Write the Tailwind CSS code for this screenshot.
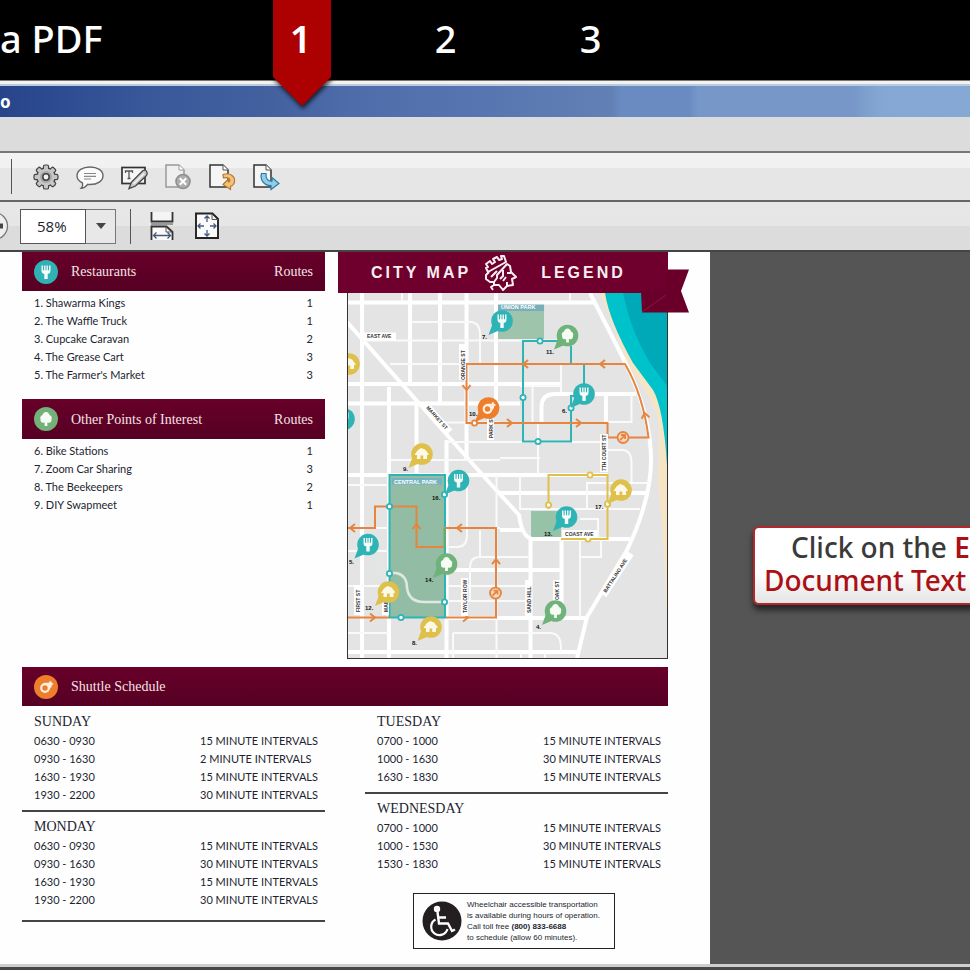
<!DOCTYPE html>
<html lang="en">
<head>
    <meta charset="UTF-8">
    <meta name="viewport" content="width=device-width, initial-scale=1.0">
    <title>Edit a PDF</title>
    <script src="https://cdn.jsdelivr.net/npm/@tailwindcss/browser@4"></script>
</head>
<body class="min-h-screen flex flex-col overflow-x-hidden bg-[#555555] font-['Lato','Noto_Sans',sans-serif] text-[#231f30]">

    <!-- Step header -->
    <header class="relative z-10 flex h-20 items-center bg-black pb-1 font-['Noto_Sans',sans-serif] text-[38px] leading-none font-medium text-white">
        <h1 class="w-[228px] whitespace-nowrap">a PDF</h1>
        <ol class="flex">
            <li class="relative w-[145px] text-center" aria-current="step">
                <svg class="absolute left-[43px] -top-5 w-[62px] h-[112px] drop-shadow-[1px_3px_2px_rgba(0,0,0,0.7)]" viewBox="0 0 62 112" aria-hidden="true">
                    <path d="M2 0H60V78L31 107L2 78Z" fill="#ad0000"/>
                </svg>
                <span class="relative font-semibold">1</span>
            </li>
            <li class="w-[145px] text-center">2</li>
            <li class="w-[145px] text-center">3</li>
        </ol>
    </header>

    <!-- Window title and menu bar -->
    <div class="h-[6px] border-t border-[#777] border-b-2 border-b-[#b9cbe0] bg-[#f4f1ee]"></div>
    <div class="flex h-[31px] items-center bg-[linear-gradient(90deg,#28458b_0%,#2c4a90_5%,#38589a_15%,#43619f_28%,#4d6ca9_36%,#5776b1_50%,#6280b4_63%,#698bc2_64%,#698bc2_71%,#7697c8_72%,#7697c8_88%,#7c9fcc_89%,#84a7d4_91%,#86a8d4_100%)]">
        <span class="font-['Noto_Sans'] text-[17px] font-bold text-white">o</span>
    </div>
    <div class="h-[34px] bg-[#dcdcdc]"></div>

    <!-- Toolbars -->
    <div class="flex h-[51px] items-center border-t-2 border-b-2 border-t-[#777] border-b-[#666] bg-[linear-gradient(#f3f3f3_0%,#f1f1f1_32%,#e6e6e6_33%,#e6e6e6_100%)] pl-[11px]">
        <span class="mr-3 h-[35px] w-px bg-[#555]"></span>
        <button type="button" aria-label="Settings" class="flex w-11 justify-center">
            <svg class="size-7" viewBox="0 0 28 28">
                <defs>
                    <g id="teeth">
                        <rect x="12" y="2.6" width="4" height="22.8" rx="1"/>
                        <rect x="12" y="2.6" width="4" height="22.8" rx="1" transform="rotate(45 14 14)"/>
                        <rect x="12" y="2.6" width="4" height="22.8" rx="1" transform="rotate(90 14 14)"/>
                        <rect x="12" y="2.6" width="4" height="22.8" rx="1" transform="rotate(135 14 14)"/>
                        <circle cx="14" cy="14" r="8.6"/>
                    </g>
                </defs>
                <use href="#teeth" fill="#444" stroke="#444" stroke-width="2.4"/>
                <use href="#teeth" fill="#c6c6c6"/>
                <circle cx="14" cy="14" r="6" fill="#a8a8a8"/>
                <circle cx="14" cy="14" r="3.2" fill="#f2f2f2" stroke="#444" stroke-width="1.6"/>
            </svg>
        </button>
        <button type="button" aria-label="Comment" class="flex w-11 justify-center">
            <svg class="size-7" viewBox="0 0 28 28" fill="none" stroke="#666" stroke-width="1.4">
                <path d="M14 4C21.5 4 27 7.6 27 12.8S21.5 21.5 14 21.5C13.3 21.5 12.4 21.5 11.7 21.3C10 23.4 7.5 25.4 5 25.4C6.6 23.6 7 21.6 6.5 20C3.2 18.5 1 16 1 12.8C1 7.6 6.5 4 14 4Z" fill="#fafafa"/>
                <path d="M8 10.5H20M8 13.3H20M8 16H15" stroke="#888" stroke-width="1.2"/>
            </svg>
        </button>
        <button type="button" aria-label="Edit document text" class="flex w-11 justify-center">
            <svg class="size-7" viewBox="0 0 28 28">
                <rect x="2" y="4.5" width="23" height="16" fill="#f6f6f6" stroke="#333" stroke-width="1.7"/>
                <path d="M5.5 10V8H12.5V10M9 8V15.5M7.5 15.5H10.5" fill="none" stroke="#555" stroke-width="1.3"/>
                <path d="M9 25.5L11.5 19L23 7.5Q26 6 27 9.5Q27.5 11.5 26 13L15.5 23Z" fill="#c9c9c9" stroke="#444" stroke-width="1.3"/>
                <path d="M13.5 21L24 10.5" stroke="#f4f4f4" stroke-width="1.5" fill="none"/>
            </svg>
        </button>
        <button type="button" aria-label="Delete page" class="flex w-11 justify-center">
            <svg class="size-7" viewBox="0 0 28 28">
                <path d="M2 2H15L20 7V24H2Z" fill="#efefef" stroke="#999" stroke-width="1.5"/>
                <path d="M15 2V7H20" fill="#fff" stroke="#999"/>
                <circle cx="19" cy="18.5" r="7.8" fill="#8f8f8f"/>
                <circle cx="19" cy="18.5" r="6.2" fill="#adadad"/>
                <path d="M15.8 15.3L22.2 21.7M22.2 15.3L15.8 21.7" stroke="#fff" stroke-width="2"/>
            </svg>
        </button>
        <button type="button" aria-label="Rotate page" class="flex w-11 justify-center">
            <svg class="size-7" viewBox="0 0 28 28">
                <path d="M2 2H15L20 7V24H2Z" fill="#f5f5f5" stroke="#333" stroke-width="1.5"/>
                <path d="M15 2V7H20" fill="#fff" stroke="#555"/>
                <path d="M15 11.5C22 9 27.5 13.5 26.5 19C26 21.5 24.5 22.8 22.5 23.3V26.5L15 21.5L20.5 16V19C22.5 18.5 22.5 15.5 19.5 14.8C18 14.5 17 14.8 15.5 15Z" fill="#f6c075" stroke="#b07a35" stroke-width="1.2"/>
            </svg>
        </button>
        <button type="button" aria-label="Export page" class="flex w-11 justify-center">
            <svg class="size-7" viewBox="0 0 28 28">
                <path d="M2 2H14L19 7V24H2Z" fill="#f5f5f5" stroke="#333" stroke-width="1.5"/>
                <path d="M14 2V7H19" fill="#fff" stroke="#555"/>
                <path d="M9.5 10.5C8 16 11 22.5 19 22.5V26.5L27 20.5L20 14.5V18.2C16 18.5 13.5 15.5 14 10.5Z" fill="#8fcdea" stroke="#2d7ba0" stroke-width="1.2"/>
            </svg>
        </button>
    </div>
    <div class="flex h-[50px] items-center border-b-2 border-b-[#444] bg-[linear-gradient(#e7e7e7_0%,#e6e6e6_50%,#dcdcdc_51%,#dcdcdc_100%)]">
        <button type="button" aria-label="Zoom in" class="w-5">
            <svg class="w-[10px] h-7" viewBox="0 0 10 28">
                <circle cx="-6" cy="14" r="13.5" fill="#eee" stroke="#777" stroke-width="1.3"/>
                <path d="M0 11.5H3V16.5H0Z" fill="#444"/>
            </svg>
        </button>
        <input type="text" aria-label="Zoom" value="58%" class="h-[35px] w-[66px] border border-[#555] bg-white px-4 font-['Open_Sans'] text-[15px]">
        <button type="button" aria-label="Zoom levels" class="flex h-[35px] w-[30px] items-center justify-center border border-l-0 border-[#777] bg-[#e8e8e8]">
            <svg class="w-[10px] h-[6px]" viewBox="0 0 10 6"><path d="M0 0H10L5 6Z" fill="#444"/></svg>
        </button>
        <span class="ml-[14px] mr-2 h-[35px] w-px bg-[#555]"></span>
        <button type="button" aria-label="Fit width" class="flex w-[45px] justify-center">
            <svg class="size-7" viewBox="0 0 28 28">
                <path d="M3.5 0V9.5H24.5V0" fill="#f4f4f4" stroke="#333" stroke-width="1.8"/>
                <path d="M3.5 28V14.5H18.5L24.5 20V28" fill="#fafafa" stroke="#333" stroke-width="1.8"/>
                <path d="M3 12H25" stroke="#999" stroke-width="2"/>
                <path d="M18 14.5V20H24" fill="none" stroke="#555"/>
                <path d="M5.5 23.5H22.5M8.5 20.5L5.5 23.5L8.5 26.5M19.5 20.5L22.5 23.5L19.5 26.5" fill="none" stroke="#44587c" stroke-width="1.3"/>
            </svg>
        </button>
        <button type="button" aria-label="Fit page" class="flex w-[45px] justify-center">
            <svg class="size-7" viewBox="0 0 28 28">
                <path d="M3 1.5H19.5L25 7V26H3Z" fill="#fafafa" stroke="#222" stroke-width="1.9"/>
                <path d="M19 2V7.5H25" fill="none" stroke="#555"/>
                <path d="M14 4V10M14 18V24M5 14H11M17 14H23M11.5 6.5L14 4L16.5 6.5M11.5 21.5L14 24L16.5 21.5M7.5 11.5L5 14L7.5 16.5M20.5 11.5L23 14L20.5 16.5" fill="none" stroke="#44587c" stroke-width="1.3"/>
            </svg>
        </button>
    </div>

    <!-- Document area -->
    <main class="flex flex-1">
        <article class="w-[73.2%] bg-[#fefefe] pl-[22px] pr-[42px] pb-3">
            <div class="grid grid-cols-[303fr_321fr] gap-[22px]">
                <div>
                    <section>
                        <div class="flex h-[39px] items-center bg-linear-to-b from-[#680029] to-[#560024] px-3 font-['Liberation_Serif',serif] text-[14px] text-[#f5e3e4]">
                            <svg class="mr-[13px] size-6" viewBox="-12 -12 24 24"><use href="#fork-badge"/></svg>
                            <h2 class="flex-1">Restaurants</h2>
                            <span>Routes</span>
                        </div>
                        <table class="mt-[3px] w-full text-[11px] leading-[18px]">
                            <tbody>
                                <tr><td class="pl-3">1. Shawarma Kings</td><td class="pr-3 text-right">1</td></tr>
                                <tr><td class="pl-3">2. The Waffle Truck</td><td class="pr-3 text-right">1</td></tr>
                                <tr><td class="pl-3">3. Cupcake Caravan</td><td class="pr-3 text-right">2</td></tr>
                                <tr><td class="pl-3">4. The Grease Cart</td><td class="pr-3 text-right">3</td></tr>
                                <tr><td class="pl-3">5. The Farmer's Market</td><td class="pr-3 text-right">3</td></tr>
                            </tbody>
                        </table>
                    </section>
                    <section class="mt-[15px]">
                        <div class="flex h-10 items-center bg-linear-to-b from-[#680029] to-[#560024] px-3 font-['Liberation_Serif',serif] text-[14px] text-[#f5e3e4]">
                            <svg class="mr-[13px] size-6" viewBox="-12 -12 24 24"><use href="#tree-badge"/></svg>
                            <h2 class="flex-1">Other Points of Interest</h2>
                            <span>Routes</span>
                        </div>
                        <table class="mt-[3px] w-full text-[11px] leading-[18px]">
                            <tbody>
                                <tr><td class="pl-3">6. Bike Stations</td><td class="pr-3 text-right">1</td></tr>
                                <tr><td class="pl-3">7. Zoom Car Sharing</td><td class="pr-3 text-right">3</td></tr>
                                <tr><td class="pl-3">8. The Beekeepers</td><td class="pr-3 text-right">2</td></tr>
                                <tr><td class="pl-3">9. DIY Swapmeet</td><td class="pr-3 text-right">1</td></tr>
                            </tbody>
                        </table>
                    </section>
                </div>

                <section class="relative">
                    <h2 class="relative z-10 -ml-[9px] flex h-[41px] items-center bg-[#6f002d] pl-[33px] font-['Liberation_Sans',sans-serif] text-[16px] font-bold tracking-[3px] text-[#fbeef0]">
                        <span>CITY MAP</span>
                        <svg class="ml-3 mr-[22px] size-9" viewBox="0 0 36 36" fill="none" stroke="#fbeef0" stroke-width="2" stroke-linejoin="round" aria-hidden="true">
                            <path d="M3 9L7 6L9 9L12 7L10 4L14 2L16 5L19 4L18 1L21 1L23 7L5 17L3 13L5 12Z"/>
                            <path d="M6 17L3 20V24L7 27H11V30L8 32L10 35M11 27L14 23V20L24 9L27 11L28 17L33 22L29 24L30 30L24 31L20 35L16 30L11 30"/>
                            <path d="M8 22L14 16M20 15V21L17 24M24 18H28M23 22L20 26M24 31V27"/>
                        </svg>
                        <span>LEGEND</span>
                    </h2>
                    <svg class="absolute -right-[22px] top-[17px] z-10 w-[49px] h-[44px]" viewBox="0 0 49 44" aria-hidden="true">
                        <path d="M0 22L1 43.5H48L40 22L48 0.5H24V22Z" fill="#6a0029"/>
                        <path d="M1 43L25 26" stroke="#8b3055" stroke-width="0.6"/>
                    </svg>

                    <svg class="block w-full border border-t-0 border-[#333]" viewBox="348 293 319 365" role="img" aria-label="City map" font-family="Liberation Sans, sans-serif" font-weight="bold">
                        <defs>
                            <g id="fork"><path d="M-4.5 -6.5V-1.5Q-4.5 1.5 -1.7 2V7H1.7V2Q4.5 1.5 4.5 -1.5V-6.5H3V-1.8H1.9V-6.5H0.5V-1.8H-0.5V-6.5H-1.9V-1.8H-3V-6.5Z" fill="#f4fbfb"/></g>
                            <g id="tree"><path d="M-1.4 7V3.5Q-5.5 4.5 -5.5 0.5Q-6.5 -3 -3.5 -4Q-2.5 -7 0 -7Q2.5 -7 3.5 -4Q6.5 -3 5.5 0.5Q5.5 4.5 1.4 3.5V7Z" fill="#f6fbf4"/></g>
                            <g id="house"><path d="M-7.5 1L-4.5 -3.5L-1 -6L3 -4.5L7 0.5L5 1V5H1.2V1.5H-1.5V5H-5V1Z" fill="#fdf9e8"/></g>
                            <g id="ride"><circle cx="-1" cy="1" r="3.8" fill="none" stroke="#fff0e4" stroke-width="2.2"/><path d="M-2 -3.2H4M4.5 -5.5L4.5 0.5M4 -2L3 2" fill="none" stroke="#fff0e4" stroke-width="2"/><path d="M3.5 -6L7.5 -3L3.5 0Z" fill="#fff0e4"/></g>
                            <g id="fork-badge"><circle r="12" fill="#30b1b4"/><use href="#fork"/></g>
                            <g id="tree-badge"><circle r="12" fill="#74b07a"/><use href="#tree"/></g>
                            <g id="ride-badge"><circle r="12" fill="#ee7d2c"/><use href="#ride"/></g>
                            <g id="pin"><path d="M-13.5 14L-9.5 3L-3 9.5Z"/><circle r="10.8"/></g>
                            <g id="fork-pin"><use href="#pin" fill="#2fb4b6"/><use href="#fork"/></g>
                            <g id="tree-pin"><use href="#pin" fill="#6fb27a"/><use href="#tree"/></g>
                            <g id="house-pin"><use href="#pin" fill="#dfc04a"/><use href="#house"/></g>
                            <g id="ride-pin"><use href="#pin" fill="#ee7d2c"/><use href="#ride"/></g>
                            <path id="arrow" d="M3 -4L-2 0L3 4" fill="none" stroke="#e5853f" stroke-width="2"/>
                        </defs>

                        <rect x="347" y="293" width="322" height="366" fill="#e4e4e5"/>

                        <!-- Coast -->
                        <path d="M600 293L627 362L643 387Q657 408 659 425Q659 470 658 480L663 537L668 643V293Z" fill="#f5e5c4"/>
                        <path d="M605 293Q609 320 633 363L653 390Q665 410 668 485V293Z" fill="#00c2cb"/>
                        <path d="M623 293Q630 330 650 363L668 387V293Z" fill="#00a9b8"/>

                        <!-- Parks -->
                        <rect x="498" y="304" width="46" height="35" fill="#9fc4ac"/>
                        <rect x="498" y="304" width="46" height="7" fill="#79aebb"/>
                        <rect x="531" y="511" width="30" height="26" fill="#96c3a7"/>

                        <!-- Streets -->
                        <g fill="none" stroke="#fff" stroke-width="4">
                            <path d="M347 302.5H594M347 384H561M347 403.5H520M347 475H608M347 652H578M500 493H648M500 530H522M446 570H561M446 618H588"/>
                            <path d="M362 293V658M389 387V658M410 293V384M440 293V402M466.5 293V460M496 293V403M446.5 440V658M416.5 404V475M530.5 538V658M561.5 539V618M606 394V424"/>
                            <path d="M541.5 422V406Q542 394 555 394H636"/>
                            <path d="M347 322L487 480L519 515Q522 537 532 539H630"/>
                            <path d="M590 293L625 362Q651 415 651 460Q651 500 627 550L587 617L577 658"/>
                        </g>
                        <g fill="none" stroke="#fafafa" stroke-width="2">
                            <path d="M412 322H470Q480 322 480 335V364M362 340.5H560M390 364H466M440 422.5H500M446 442H608M390 460H500M500 458H540M347 485H389M347 528H389M347 551H389M446 528H500"/>
                            <path d="M561 364V392M532.5 386V422M520 386H560M631.5 394V422H606M538 423V475M608 450H622Q631 450 631.5 462V482M587 509V483H650M520 509H640M520 475V510"/>
                            <path d="M446 547H457Q467 547 467 535V475M470 600V568Q470 557 479 557H530M480 530V557M446 586H530M446 601H530M453 633H550Q561 633 561 648V652M453 633V658M580 540V617M580 557H601V540M496.5 475V658M347 586H389M347 633H389M580 519H598V539M521 652V658M545 652V658"/>
                            <path d="M402 302V293M570 302V293"/>
                        </g>

                        <!-- Central park -->
                        <rect x="389.5" y="475" width="55.5" height="142.5" fill="#92bda4"/>
                        <path d="M376 550V558Q376 573 390 573H396Q407 575 407 588Q409 602 424 602H445" fill="none" stroke="#dfe8e3" stroke-width="2.5"/>
                        <rect x="392" y="478" width="50" height="6.5" fill="#74b3c2"/>

                        <!-- Routes -->
                        <g fill="none" stroke-width="2">
                            <g stroke="#2fb4b6">
                                <path d="M567 341H523V441.5H571V396H584V364M571 346V364"/>
                                <path d="M389.5 475H445V617.5H389.5Z"/>
                            </g>
                            <path d="M548.5 509V475H607.5V539H561" stroke="#dfc04a"/>
                            <g stroke="#e5853f">
                                <path d="M466.5 364H625Q643 395 648.5 437.5H607.5V423H466.5Z"/>
                                <path d="M347 528H375V506.5H416.5V547H444.5M444.5 528H496V617.5H446M347 617.5H389"/>
                            </g>
                            <path d="M444.5 547V528" stroke="#74a85c"/>
                        </g>
                        <use href="#arrow" x="525" y="364"/>
                        <use href="#arrow" x="602" y="364"/>
                        <use href="#arrow" x="352" y="528"/>
                        <use href="#arrow" x="459" y="528"/>
                        <use href="#arrow" transform="translate(466.5 388) rotate(-90)"/>
                        <use href="#arrow" transform="translate(510 423) rotate(180)"/>
                        <use href="#arrow" transform="translate(579 423) rotate(180)"/>
                        <use href="#arrow" transform="translate(466 617.5) rotate(180)"/>
                        <use href="#arrow" transform="translate(373 617.5) rotate(180)"/>
                        <use href="#arrow" transform="translate(645 415) rotate(80)"/>
                        <use href="#arrow" transform="translate(416.5 526) rotate(90)"/>
                        <use href="#arrow" transform="translate(496 561) rotate(90)"/>

                        <!-- Stops -->
                        <g fill="#fff" stroke-width="1.8">
                            <g stroke="#2fb4b6">
                                <circle cx="540" cy="341" r="2.6"/><circle cx="523" cy="397.5" r="2.6"/><circle cx="538" cy="441.5" r="2.6"/><circle cx="571" cy="408" r="2.6"/>
                                <circle cx="389.5" cy="506.5" r="2.6"/><circle cx="389.5" cy="573.5" r="2.6"/><circle cx="401" cy="617.5" r="2.6"/><circle cx="444.5" cy="602" r="2.6"/><circle cx="444.5" cy="494.5" r="2.6"/>
                            </g>
                            <g stroke="#dfc04a">
                                <circle cx="590" cy="475" r="2.6"/><circle cx="548.5" cy="505" r="2.6"/><circle cx="607.5" cy="504" r="2.6"/><circle cx="588" cy="539" r="2.6"/>
                            </g>
                            <g stroke="#e5853f">
                                <circle cx="474.5" cy="423" r="2.6"/>
                                <circle cx="623" cy="437.5" r="5.5" fill="#f6d9bf"/><path d="M620 440L625 435M621 435H625V439" fill="none"/>
                                <circle cx="495.5" cy="593" r="5.5" fill="#f6d9bf"/><path d="M492.5 595.5L497.5 590.5M493.5 590.5H497.5V594.5" fill="none"/>
                            </g>
                        </g>

                        <!-- Street names -->
                        <g fill="#fff">
                            <rect x="363" y="332.5" width="33" height="8"/>
                            <rect x="459" y="344" width="7" height="36"/>
                            <rect x="0" y="-4" width="38" height="8" transform="translate(424 404) rotate(48)"/>
                            <rect x="487" y="412" width="7" height="28"/>
                            <rect x="600" y="434" width="8" height="38"/>
                            <rect x="562" y="530" width="35" height="8"/>
                            <rect x="0" y="-4" width="50" height="8" transform="translate(603 595) rotate(-57)"/>
                            <rect x="354" y="585" width="7" height="30"/>
                            <rect x="382" y="585" width="7" height="30"/>
                            <rect x="461" y="578" width="7" height="38"/>
                            <rect x="525" y="580" width="7" height="36"/>
                            <rect x="553" y="580" width="7" height="22"/>
                        </g>
                        <g fill="#333" font-size="5">
                            <text x="367" y="338.5">EAST AVE</text>
                            <text transform="translate(464.5 380) rotate(-90)">ORANGE ST</text>
                            <text transform="translate(426 408) rotate(48)">MARKET ST</text>
                            <text transform="translate(492.5 438) rotate(-90)">PARK ST</text>
                            <text transform="translate(606 471) rotate(-90)">7TH COURT ST</text>
                            <text x="565" y="536">COAST AVE</text>
                            <text transform="translate(606 593) rotate(-57)">BATTALINO AVE</text>
                            <text transform="translate(359.5 612) rotate(-90)">FIRST ST</text>
                            <text transform="translate(387.5 612) rotate(-90)">MAIN ST</text>
                            <text transform="translate(466.5 613) rotate(-90)">TAYLOR ROW</text>
                            <text transform="translate(530.5 613) rotate(-90)">SAND HILL</text>
                            <text transform="translate(558.5 600) rotate(-90)">OAK ST</text>
                        </g>
                        <g fill="#fff" font-size="5.5">
                            <text x="501" y="309.5">UNION PARK</text>
                            <text x="394" y="483.5">CENTRAL PARK</text>
                        </g>

                        <!-- Pins -->
                        <use href="#fork-pin" x="502" y="321"/>
                        <use href="#fork-pin" x="584" y="394"/>
                        <use href="#fork-pin" x="458.5" y="480.5"/>
                        <use href="#fork-pin" x="368" y="544.5"/>
                        <use href="#fork-pin" x="566.5" y="517"/>
                        <use href="#fork-pin" x="344" y="419"/>
                        <use href="#tree-pin" x="567.5" y="335.5"/>
                        <use href="#tree-pin" x="446.5" y="564"/>
                        <use href="#tree-pin" x="555.5" y="611"/>
                        <use href="#house-pin" x="349" y="364"/>
                        <use href="#house-pin" x="422" y="454"/>
                        <use href="#house-pin" x="388.5" y="592"/>
                        <use href="#house-pin" x="431" y="627"/>
                        <use href="#house-pin" x="621" y="490"/>
                        <use href="#ride-pin" x="488.5" y="408"/>
                        <g fill="#111" font-size="6">
                            <text x="482" y="339">7.</text>
                            <text x="546" y="354">11.</text>
                            <text x="469" y="416">10.</text>
                            <text x="403" y="471">9.</text>
                            <text x="562" y="413">6.</text>
                            <text x="432" y="500">16.</text>
                            <text x="349" y="564">5.</text>
                            <text x="365" y="610">12.</text>
                            <text x="425" y="582">14.</text>
                            <text x="412" y="645">8.</text>
                            <text x="595" y="509">17.</text>
                            <text x="544" y="536">13.</text>
                            <text x="536" y="629">4.</text>
                        </g>
                    </svg>
                </section>
            </div>

            <section class="mt-2">
                <div class="flex h-[39px] items-center bg-linear-to-b from-[#680029] to-[#560024] px-3 font-['Liberation_Serif',serif] text-[14px] text-[#f5e3e4]">
                    <svg class="mr-[13px] size-6" viewBox="-12 -12 24 24"><use href="#ride-badge"/></svg>
                    <h2>Shuttle Schedule</h2>
                </div>
                <div class="grid grid-cols-2 gap-10 pt-[6px] text-[11px] leading-[18px] whitespace-nowrap">
                    <div>
                        <div class="border-b-2 border-[#444] pb-[6px]">
                            <h3 class="pl-3 font-['Liberation_Serif',serif] text-[14px] leading-[20px]">SUNDAY</h3>
                            <table class="w-full">
                                <tbody>
                                    <tr><td class="pl-3">0630 - 0930</td><td class="w-[125px]">15 MINUTE INTERVALS</td></tr>
                                    <tr><td class="pl-3">0930 - 1630</td><td>2 MINUTE INTERVALS</td></tr>
                                    <tr><td class="pl-3">1630 - 1930</td><td>15 MINUTE INTERVALS</td></tr>
                                    <tr><td class="pl-3">1930 - 2200</td><td>30 MINUTE INTERVALS</td></tr>
                                </tbody>
                            </table>
                        </div>
                        <div class="border-b-2 border-[#444] pt-[5px] pb-[11px]">
                            <h3 class="pl-3 font-['Liberation_Serif',serif] text-[14px] leading-[20px]">MONDAY</h3>
                            <table class="w-full">
                                <tbody>
                                    <tr><td class="pl-3">0630 - 0930</td><td class="w-[125px]">15 MINUTE INTERVALS</td></tr>
                                    <tr><td class="pl-3">0930 - 1630</td><td>30 MINUTE INTERVALS</td></tr>
                                    <tr><td class="pl-3">1630 - 1930</td><td>15 MINUTE INTERVALS</td></tr>
                                    <tr><td class="pl-3">1930 - 2200</td><td>30 MINUTE INTERVALS</td></tr>
                                </tbody>
                            </table>
                        </div>
                    </div>
                    <div>
                        <div class="border-b-2 border-[#444] pb-[6px]">
                            <h3 class="pl-3 font-['Liberation_Serif',serif] text-[14px] leading-[20px]">TUESDAY</h3>
                            <table class="w-full">
                                <tbody>
                                    <tr><td class="pl-3">0700 - 1000</td><td class="w-[125px]">15 MINUTE INTERVALS</td></tr>
                                    <tr><td class="pl-3">1000 - 1630</td><td>30 MINUTE INTERVALS</td></tr>
                                    <tr><td class="pl-3">1630 - 1830</td><td>15 MINUTE INTERVALS</td></tr>
                                </tbody>
                            </table>
                        </div>
                        <div class="pt-[5px]">
                            <h3 class="pl-3 font-['Liberation_Serif',serif] text-[14px] leading-[20px]">WEDNESDAY</h3>
                            <table class="w-full">
                                <tbody>
                                    <tr><td class="pl-3">0700 - 1000</td><td class="w-[125px]">15 MINUTE INTERVALS</td></tr>
                                    <tr><td class="pl-3">1000 - 1530</td><td>30 MINUTE INTERVALS</td></tr>
                                    <tr><td class="pl-3">1530 - 1830</td><td>15 MINUTE INTERVALS</td></tr>
                                </tbody>
                            </table>
                        </div>
                        <div class="mt-5 ml-12 flex h-14 w-[202px] items-center border border-[#222] pl-2 font-['Liberation_Sans',sans-serif] text-[8px] leading-[11px]">
                            <svg class="mr-[5px] size-10" viewBox="0 0 40 40" aria-hidden="true">
                                <circle cx="20" cy="20" r="19.5" fill="#231f20"/>
                                <circle cx="15" cy="8" r="3.2" fill="#fff"/>
                                <path d="M15.5 11L17 22.5H26L30 30L33 28.5M16 16.5H24" fill="none" stroke="#fff" stroke-width="2.4"/>
                                <path d="M13.5 18.5A8.3 8.3 0 1 0 25.5 28" fill="none" stroke="#fff" stroke-width="2.2"/>
                            </svg>
                            <p>Wheelchair accessible transportation<br>is available during hours of operation.<br>Call toll free <b>(800) 833-6688</b><br>to schedule (allow 60 minutes).</p>
                        </div>
                    </div>
                </div>
            </section>
        </article>

        <aside class="flex-1 overflow-hidden pt-[274px] pl-[43px]">
            <p class="w-[260px] rounded-md border-2 border-[#b4282c] bg-linear-to-b from-white from-60% to-[#e4e4e4] pt-[3px] pb-[6px] pl-[9px] font-['Noto_Sans',sans-serif] text-[28px] leading-[33px] font-medium whitespace-nowrap text-[#3a3a3a] shadow-[0_5px_6px_rgba(0,0,0,0.6)]">
                <span class="pl-[27px]">Click on the <b class="font-semibold text-[#ab1015]">E</b></span><br>
                <b class="font-medium text-[#ab1015]">Document Text</b>
            </p>
        </aside>
    </main>
    <div class="h-[6px] border-t-3 border-b-3 border-t-[#cfcfcf] border-b-[#4a4748]"></div>
</body>
</html>
